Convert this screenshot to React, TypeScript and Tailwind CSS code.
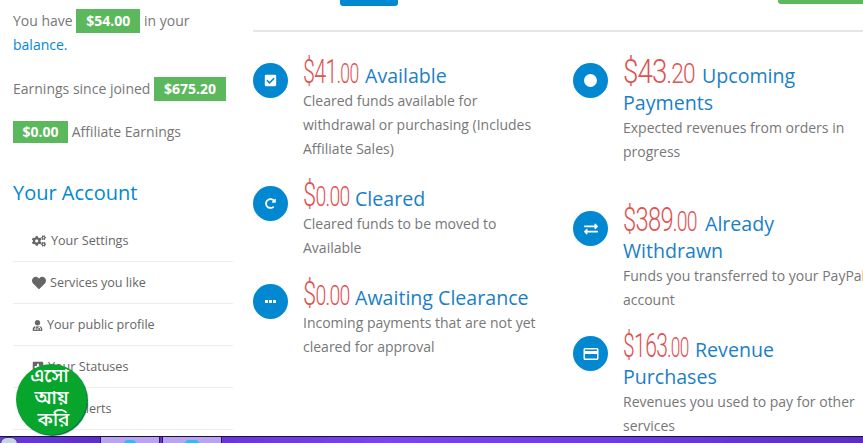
import React from "react";
import { FaCogs, FaHeart, FaUserMd, FaPlusSquare, FaBell, FaCheckSquare, FaRedoAlt, FaExchangeAlt } from "react-icons/fa";
import { MdCreditCard } from "react-icons/md";

const Badge: React.FC<{ children: React.ReactNode; className?: string }> = ({ children, className }) => (
  <span className={`inline-block bg-[#5cb85c] text-white font-bold text-[14px] text-center ${className}`}>
    {children}
  </span>
);

// handwritten style figure: big part plus a smaller tail
const Amount: React.FC<{ big: string; small: string; squeeze: string }> = ({ big, small, squeeze }) => (
  <span className={`inline-block text-[#e05252] font-['Roboto',sans-serif] font-light leading-[27px] tracking-[-1px] whitespace-nowrap origin-left ${squeeze}`}>
    <span className="text-[33px]">{big}</span>
    <span className="text-[27px]">{small}</span>
  </span>
);

const Stat: React.FC<{
  icon: React.ReactNode;
  big: string;
  small: string;
  squeeze: string;
  title: string;
  desc: string;
  amountWidth: string;
  className: string;
  iconTop: string;
}> = ({ icon, big, small, squeeze, title, desc, amountWidth, className, iconTop }) => (
  <div className={`flex ${className}`}>
    <div className={`w-[35px] h-[35px] rounded-full bg-[#0288d1] flex items-center justify-center text-white flex-none mr-[15px] ${iconTop}`}>
      {icon}
    </div>
    <div className="flex-1 min-w-0">
      <h3 className="text-[19.6px] leading-[27px] text-[#1a7fc7]">
        <span className={`inline-block h-[14px] -mt-2 ${amountWidth}`}>
          <Amount big={big} small={small} squeeze={squeeze} />
        </span>
        {title}
      </h3>
      <p className="text-[14px] leading-6 text-[#777]">{desc}</p>
    </div>
  </div>
);

const navItems = [
  { label: "Your Settings", icon: <FaCogs size={14} />, gap: "gap-[5px]" },
  { label: "Services you like", icon: <FaHeart size={14} />, gap: "gap-1" },
  { label: "Your public profile", icon: <FaUserMd size={11} />, gap: "gap-1" },
  { label: "Your Statuses", icon: <FaPlusSquare size={12} />, gap: "gap-1" },
  { label: "Your Alerts", icon: <FaBell size={12} />, gap: "gap-[3px]" },
];

export default function App() {
  return (
    <div className="relative w-[863px] h-[443px] overflow-hidden bg-white font-['Open_Sans',sans-serif] text-[14px] text-[#777]">
      <div className="flex h-[436px]">
        <aside className="w-[220px] ml-[13px] flex-none">
          <p className="leading-6 mt-[9px]">
            You have <Badge className="w-16 leading-6">$54.00</Badge> in your <span className="text-[#0288d1]">balance.</span>
          </p>
          <p className="leading-6 mt-[20px]">
            Earnings since joined <Badge className="w-[72px] leading-6">$675.20</Badge>
          </p>
          <p className="leading-6 mt-[19px]">
            <Badge className="w-[55px] leading-[22px]">$0.00</Badge> Affiliate Earnings
          </p>
          <h2 className="text-[20px] leading-7 text-[#0288d1] mt-[35px] mb-[13px]">Your Account</h2>
          <ul className="text-[12.6px] text-[#666]">
            {navItems.map((item) => (
              <li key={item.label} className={`h-[42px] border-b border-[#eeeee6] pl-[19px] pt-px flex items-center ${item.gap}`}>
                {item.icon}
                <span>{item.label}</span>
              </li>
            ))}
          </ul>
        </aside>
        <main className="w-[615px] flex-none ml-[20px] relative">
          <div className="h-[32px] border-b-2 border-[#e6e6e6] relative">
            <div className="absolute left-[87px] top-0 w-[58px] h-[6px] bg-[#0288d1] rounded-b-[3px]" />
            <div className="absolute left-[525px] top-0 w-[85px] h-[4px] bg-[#5cb85c] rounded-bl-[3px]" />
          </div>
          <div className="flex">
            <div className="w-[320px] flex-none pr-[35px]">
              <Stat
                className="mt-[30px]"
                iconTop="mt-px"
                icon={<FaCheckSquare size={13} />}
                big="$41"
                small=".00"
                squeeze="scale-x-[0.65]"
                amountWidth="w-[62px]"
                title="Available"
                desc="Cleared funds available for withdrawal or purchasing (Includes Affiliate Sales)"
              />
              <Stat
                className="mt-[24px]"
                iconTop="mt-px"
                icon={<FaRedoAlt size={11} />}
                big="$"
                small="0.00"
                squeeze="scale-x-[0.72]"
                amountWidth="w-[52px]"
                title="Cleared"
                desc="Cleared funds to be moved to Available"
              />
              <Stat
                className="mt-[24px]"
                iconTop="mt-0"
                icon={<span className="flex gap-px"><i className="w-[3px] h-[3px] bg-white" /><i className="w-[3px] h-[3px] bg-white" /><i className="w-[3px] h-[3px] bg-white" /></span>}
                big="$"
                small="0.00"
                squeeze="scale-x-[0.72]"
                amountWidth="w-[52px]"
                title="Awaiting Clearance"
                desc="Incoming payments that are not yet cleared for approval"
              />
            </div>
            <div className="w-[295px] flex-none">
              <Stat
                className="mt-[30px]"
                iconTop="mt-px"
                icon={<span className="w-[13px] h-[13px] bg-white rounded-full" />}
                big="$43"
                small=".20"
                squeeze="scale-x-[0.84]"
                amountWidth="w-[79px]"
                title="Upcoming Payments"
                desc="Expected revenues from orders in progress"
              />
              <Stat
                className="mt-[46px]"
                iconTop="mt-px"
                icon={<FaExchangeAlt size={14} />}
                big="$389"
                small=".00"
                squeeze="scale-x-[0.72]"
                amountWidth="w-[82px]"
                title="Already Withdrawn"
                desc="Funds you transferred to your PayPal account"
              />
              <Stat
                className="mt-[24px]"
                iconTop="mt-0"
                icon={<MdCreditCard size={18} />}
                big="$163"
                small=".00"
                squeeze="scale-x-[0.64]"
                amountWidth="w-[72px]"
                title="Revenue Purchases"
                desc="Revenues you used to pay for other services"
              />
            </div>
          </div>
        </main>
      </div>
      {/* floating bubble */}
      <div className="absolute left-[16px] top-[364px] w-[71px] h-[71px] rounded-full bg-[#07a52c] shadow-[1px_1px_1px_#064] flex flex-col items-center justify-center text-white text-[19px] leading-[22px] font-medium font-['Noto_Sans_Bengali','Noto_Sans',sans-serif]">
        <span className="-ml-1">এসো</span>
        <span>আয়</span>
        <span className="ml-1">করি</span>
      </div>
      {/* taskbar strip */}
      <div className="absolute left-0 right-0 bottom-0 h-[7px] bg-[linear-gradient(90deg,#6a3bd8,#5a2fc2_12%,#7a45ea_45%,#6a3bdc_75%,#5a2fc0)] border-t border-[#1b1140] flex">
        <div className="absolute left-0 top-0 w-[18px] h-[14px] rounded-full bg-[#c9d4e8] border border-[#3a3a7a]" />
        <div className="ml-[100px] w-[60px] h-full bg-[#b9a5ee] border-x border-[#2a1a66] flex justify-center">
          <span className="w-[12px] h-[4px] mt-[3px] rounded-t-full bg-[#3fb5e8]" />
        </div>
        <div className="ml-[2px] w-[60px] h-full bg-[#b9a5ee] border-x border-[#2a1a66] flex justify-center">
          <span className="w-[14px] h-[4px] mt-[3px] rounded-t-full bg-[#3fb5e8]" />
        </div>
      </div>
    </div>
  );
}
